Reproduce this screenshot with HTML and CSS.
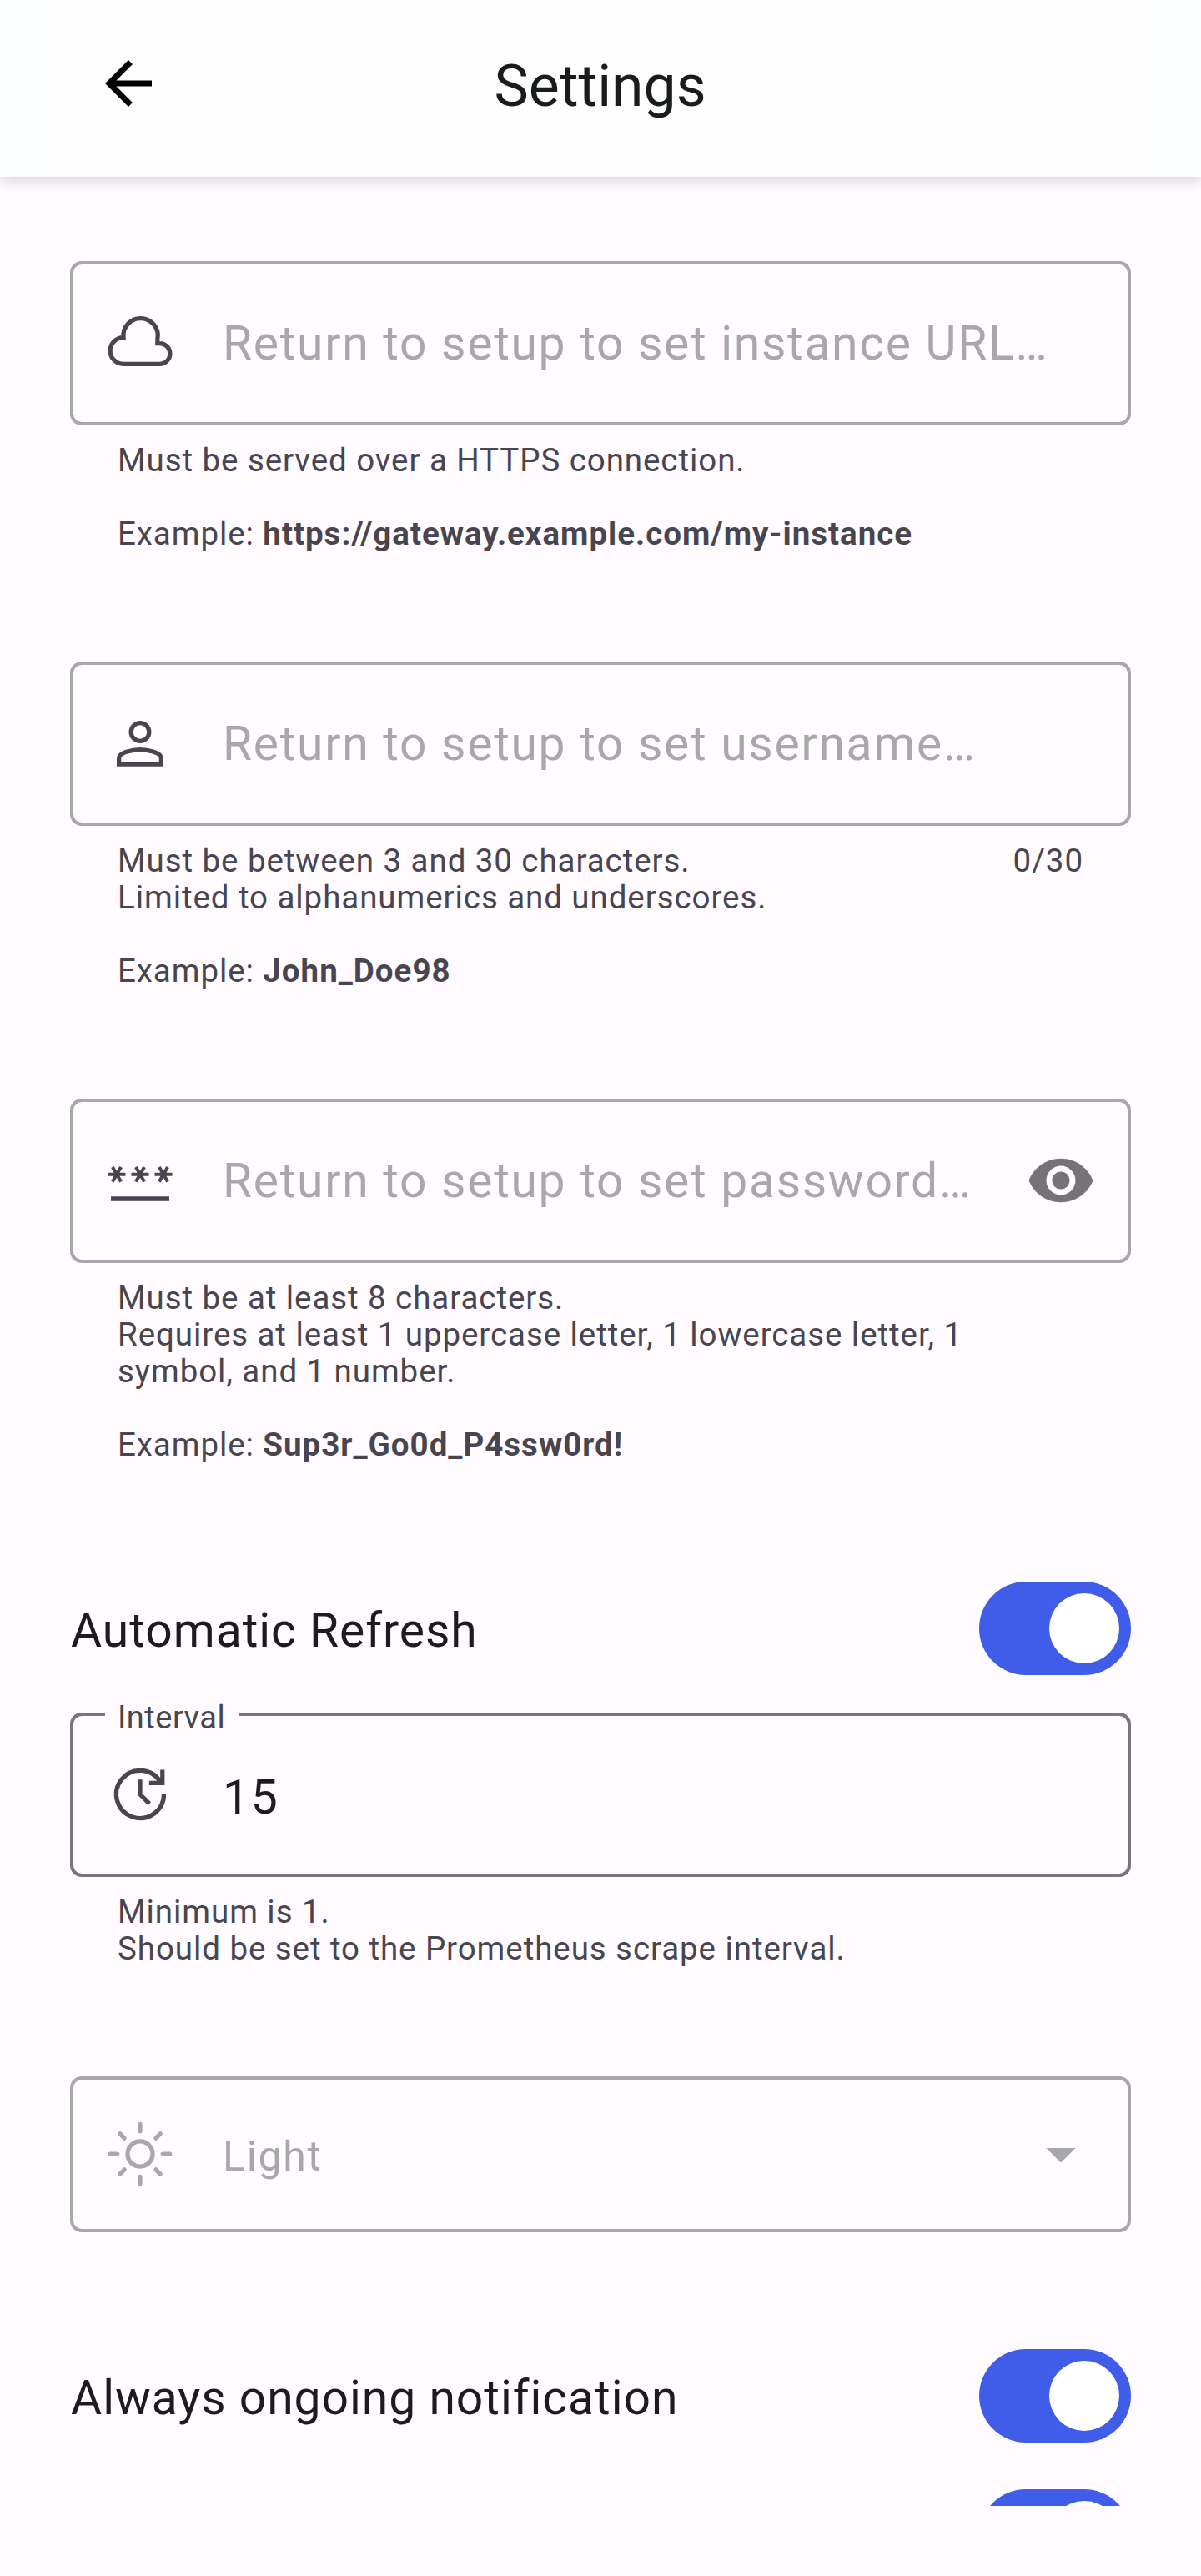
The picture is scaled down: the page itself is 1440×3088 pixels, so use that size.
FILE: index.html
```html
<!DOCTYPE html>
<html lang="en">
<head>
<meta charset="utf-8">
<title>Settings</title>
<link rel="stylesheet" href="styles.css">
</head>
<body>
<header class="app-bar">
  <svg class="icon back" viewBox="0 0 24 24"><path d="M20 11H7.83l5.59-5.59L12 4l-8 8 8 8 1.41-1.41L7.83 13H20z"/></svg>
  <h1 class="title">Settings</h1>
</header>
<main class="content">
  <section class="field url">
    <div class="box disabled">
      <svg class="icon line" viewBox="0 0 24 24"><path d="M6.3 10.15A5.9 5.9 0 1 1 17.95 10.65V12.15H18.7a3.55 3.55 0 0 1 0 7.1H6.3a4.55 4.55 0 0 1 0-9.1z"/></svg>
      <span class="value">Return to setup to set instance URL…</span>
    </div>
    <div class="support"><p>Must be served over a HTTPS connection.<br><br>Example: <b>https://gateway.example.com/my-instance</b></p></div>
  </section>
  <section class="field username">
    <div class="box disabled">
      <svg class="icon line" viewBox="0 0 24 24"><circle cx="12" cy="8.15" r="3.1"/><path d="M4.75 19.2V17.2C4.75 16 6 15.3 7.3 14.9 9 14.4 10.5 14.15 12 14.15s3 .25 4.7.75c1.3.4 2.55 1.1 2.55 2.3v2z"/></svg>
      <span class="value">Return to setup to set username…</span>
    </div>
    <div class="support"><p>Must be between 3 and 30 characters.<br>Limited to alphanumerics and underscores.<br><br>Example: <b>John_Doe98</b></p><span>0/30</span></div>
  </section>
  <section class="field password">
    <div class="box disabled">
      <svg class="icon line" viewBox="0 0 24 24"><path d="M2 18.3h20" stroke-width="1.6"/><path class="stars" d="M1 9.9h6M2.55 7.4l2.9 5M5.45 7.4l-2.9 5M9 9.9h6M10.55 7.4l2.9 5M13.45 7.4l-2.9 5M17 9.9h6M18.55 7.4l2.9 5M21.45 7.4l-2.9 5"/></svg>
      <span class="value">Return to setup to set password…</span>
      <svg class="icon eye" viewBox="0 0 24 24"><path d="M12 4.5C7 4.5 2.73 7.61 1 12c1.73 4.39 6 7.5 11 7.5s9.27-3.11 11-7.5c-1.73-4.39-6-7.5-11-7.5zM12 17c-2.76 0-5-2.24-5-5s2.24-5 5-5 5 2.24 5 5-2.24 5-5 5zm0-8c-1.66 0-3 1.34-3 3s1.34 3 3 3 3-1.34 3-3-1.34-3-3-3z"/></svg>
    </div>
    <div class="support"><p>Must be at least 8 characters.<br>Requires at least 1 uppercase letter, 1 lowercase letter, 1<br>symbol, and 1 number.<br><br>Example: <b>Sup3r_Go0d_P4ssw0rd!</b></p></div>
  </section>
  <div class="row refresh"><span class="name">Automatic Refresh</span><span class="switch"><i class="knob"></i></span></div>
  <section class="field interval">
    <div class="box">
      <span class="label">Interval</span>
      <svg class="icon line" viewBox="0 0 24 24"><path d="M20.15 12A8.15 8.15 0 1 1 18.9 7.65M15.1 8.1H19.65V3.6M12 6.9V12l3.2 3.2"/></svg>
      <span class="value">15</span>
    </div>
    <div class="support"><p>Minimum is 1.<br>Should be set to the Prometheus scrape interval.</p></div>
  </section>
  <div class="box disabled select">
    <svg class="icon line sun" viewBox="0 0 24 24"><circle cx="12" cy="12" r="4.3"/><path d="M12 1.8v2.4M12 19.8v2.4M1.8 12h2.4M19.8 12h2.4M5.1 5.1l1.5 1.5M17.4 17.4l1.5 1.5M5.1 18.9l1.5-1.5M17.4 6.6l1.5-1.5"/></svg>
    <span class="value">Light</span>
    <svg class="icon arrow" viewBox="0 0 24 24"><path d="M7 10l5 5 5-5z"/></svg>
  </div>
  <div class="row notification"><span class="name">Always ongoing notification</span><span class="switch"><i class="knob"></i></span></div>
  <div class="row clipped"><span class="switch"><i class="knob"></i></span></div>
</main>
</body>
</html>
```
FILE: styles.css
```css
* { box-sizing: border-box; }
body {
  margin: 0;
  height: 3088px;
  overflow: hidden;
  background: #fffbff;
  color: #1c1b1f;
  font-family: Roboto, sans-serif;
  font-size: 57px;
}
.icon { width: 84px; height: 84px; flex: none; fill: currentColor; }
.line { fill: none; stroke: currentColor; stroke-width: 1.5; }
.stars { stroke-width: 1.15; }
.app-bar {
  position: relative;
  z-index: 1;
  display: grid;
  grid-template-columns: 84px 1fr 84px;
  align-items: center;
  height: 212px;
  padding: 0 112px 12px;
  background: linear-gradient(90deg, #fcfdff 0 56px, #fefdfe 56px 1384px, #fcfdff 1384px);
  box-shadow: 0 5px 16px rgba(0, 0, 0, .16);
}
.back { color: #000; }
.title { margin: 6px 1px 0 0; text-align: center; font-size: 69.6px; font-weight: 400; line-height: 84px; color: #191c1d; }
.content { display: flex; flex-direction: column; height: 2792px; padding: 101px 84px 0; overflow: hidden; }
.field { flex: none; }
.url { height: 480px; }
.username { height: 524px; }
.password { height: 579px; }
.interval { height: 436px; }
.box {
  position: relative;
  display: flex;
  align-items: center;
  height: 197px;
  padding: 0 38px;
  border: 4px solid #79747e;
  border-radius: 14px;
  color: #49454f;
}
.box .icon { margin-top: -1px; }
.box.disabled { border-color: #a8a7a9; }
.value { flex: 1; margin: 7px 0 0 57px; letter-spacing: 1.7px; line-height: 84px; white-space: nowrap; color: #1c1b1f; }
.disabled .value { margin-top: 1px; color: #a8a7a9; }
.eye { color: #757376; }
.support {
  display: flex;
  justify-content: space-between;
  padding: 20px 57px 0;
  font-size: 38.5px;
  line-height: 44px;
  letter-spacing: .93px;
  color: #49454f;
}
.support p { margin: 0; white-space: nowrap; }
.support b { letter-spacing: 1px; }
.label {
  position: absolute;
  left: 38px;
  top: -20px;
  width: 160px;
  padding-left: 15px;
  background: #fffbff;
  font-size: 38px;
  line-height: 44px;
  letter-spacing: .5px;
}
.row { flex: none; display: flex; justify-content: space-between; align-items: center; height: 112px; letter-spacing: .96px; line-height: 84px; }
.name { margin: 6px 0 0 1px; }
.refresh { margin-bottom: 45px; }
.select { flex: none; height: 187px; margin-bottom: 140px; }
.select .value { margin-top: 5px; font-size: 50px; }
.sun { color: #a8a7a9; stroke-linecap: round; }
.arrow { color: #a8a7a9; }
.switch { display: flex; justify-content: flex-end; width: 182px; height: 112px; padding: 14px; border-radius: 56px; background: #405dea; }
.knob { width: 84px; height: 84px; border-radius: 50%; background: #fff; }
.clipped { margin-top: 56px; justify-content: flex-end; }
```
